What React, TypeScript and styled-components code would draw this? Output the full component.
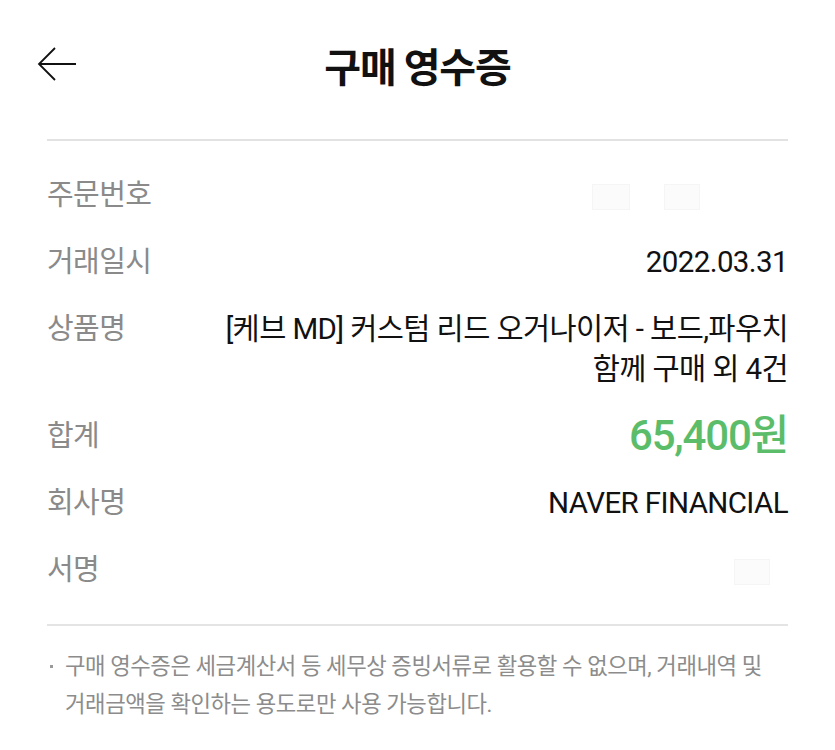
import React from "react";
import styled, { createGlobalStyle } from "styled-components";

const Global = createGlobalStyle`
  html, body { margin: 0; padding: 0; background: #fff; }
  body { font-family: Roboto, "Noto Sans CJK KR", sans-serif; -webkit-font-smoothing: antialiased; }
`;

const Page = styled.div`
  width: 835px;
  min-height: 750px;
  background: #fff;
  box-sizing: border-box;
  padding: 0 47px;
`;

const Header = styled.header`
  position: relative;
  height: 141px;
  display: flex;
  align-items: center;
  justify-content: center;
  border-bottom: 2px solid #e2e2e2;
  box-sizing: border-box;
  padding-bottom: 10px;
`;

const BackButton = styled.button`
  position: absolute;
  left: -12px;
  top: 45px;
  width: 44px;
  height: 38px;
  padding: 0;
  border: 0;
  background: none;
  display: flex;
  align-items: center;
  justify-content: center;
`;

const Title = styled.h1`
  margin: 0;
  font-family: "Noto Sans CJK KR", sans-serif;
  font-size: 40px;
  font-weight: 700;
  color: #111;
  letter-spacing: -1.1px;
`;

const List = styled.dl`
  margin: 0;
  padding: 34px 0 34px;
  display: flex;
  flex-direction: column;
  gap: 27px;
  border-bottom: 2px solid #e4e4e4;
`;

const Row = styled.div`
  display: flex;
  justify-content: space-between;
  align-items: flex-start;
  min-height: 40px;
`;

const Label = styled.dt`
  font-family: Roboto, "Noto Sans CJK KR", sans-serif;
  font-size: 29px;
  line-height: 40px;
  color: #8a8a8a;
  letter-spacing: -0.6px;
  margin: 0;
`;

const Value = styled.dd<{ $green?: boolean }>`
  margin: 0;
  text-align: right;
  font-family: Roboto, "Noto Sans CJK KR", sans-serif;
  font-size: ${(p) => (p.$green ? "42px" : "29.5px")};
  font-weight: ${(p) => (p.$green ? 500 : 400)};
  line-height: 40px;
  color: ${(p) => (p.$green ? "#5bbd69" : "#111")};
  letter-spacing: ${(p) => (p.$green ? "-1.2px" : "-0.6px")};
`;

const Blur = styled.span<{ $w: number; $gap?: number; $clear?: boolean }>`
  display: inline-block;
  width: ${(p) => p.$w}px;
  height: 24px;
  margin-left: ${(p) => p.$gap ?? 34}px;
  vertical-align: middle;
  background: ${(p) => (p.$clear ? "transparent" : "#fbfbfb")};
  border: 1px solid ${(p) => (p.$clear ? "transparent" : "#f5f5f5")};
`;

const Note = styled.p`
  margin: 0;
  padding: 21px 0 0 18px;
  position: relative;
  font-family: Roboto, "Noto Sans CJK KR", sans-serif;
  font-size: 22.3px;
  line-height: 38px;
  color: #8c8c8c;
  letter-spacing: -0.45px;
  &::before {
    content: "";
    position: absolute;
    left: 3px;
    top: 39px;
    width: 3px;
    height: 3px;
    background: #9a9a9a;
  }
`;

export default function App() {
  return (
    <Page>
      <Global />
      <Header>
        <BackButton aria-label="뒤로">
          <svg width="40" height="36" viewBox="0 0 40 36" fill="none">
            <path d="M39 18H3M18 2L2 18l16 16" stroke="#111" strokeWidth="1.8" />
          </svg>
        </BackButton>
        <Title>구매 영수증</Title>
      </Header>
      <List>
        <Row>
          <Label>주문번호</Label>
          <Value>
            <Blur $w={36} />
            <Blur $w={34} />
            <Blur $w={52} $clear />
          </Value>
        </Row>
        <Row>
          <Label>거래일시</Label>
          <Value>2022.03.31</Value>
        </Row>
        <Row>
          <Label>상품명</Label>
          <Value>
            [케브 MD] 커스텀 리드 오거나이저 - 보드,파우치
            <br />
            함께 구매 외 4건
          </Value>
        </Row>
        <Row>
          <Label>합계</Label>
          <Value $green>65,400원</Value>
        </Row>
        <Row>
          <Label>회사명</Label>
          <Value>NAVER FINANCIAL</Value>
        </Row>
        <Row>
          <Label>서명</Label>
          <Value>
            <Blur $w={34} />
            <Blur $w={4} $gap={12} $clear />
          </Value>
        </Row>
      </List>
      <Note>
        구매 영수증은 세금계산서 등 세무상 증빙서류로 활용할 수 없으며, 거래내역 및
        <br />
        거래금액을 확인하는 용도로만 사용 가능합니다.
      </Note>
    </Page>
  );
}
